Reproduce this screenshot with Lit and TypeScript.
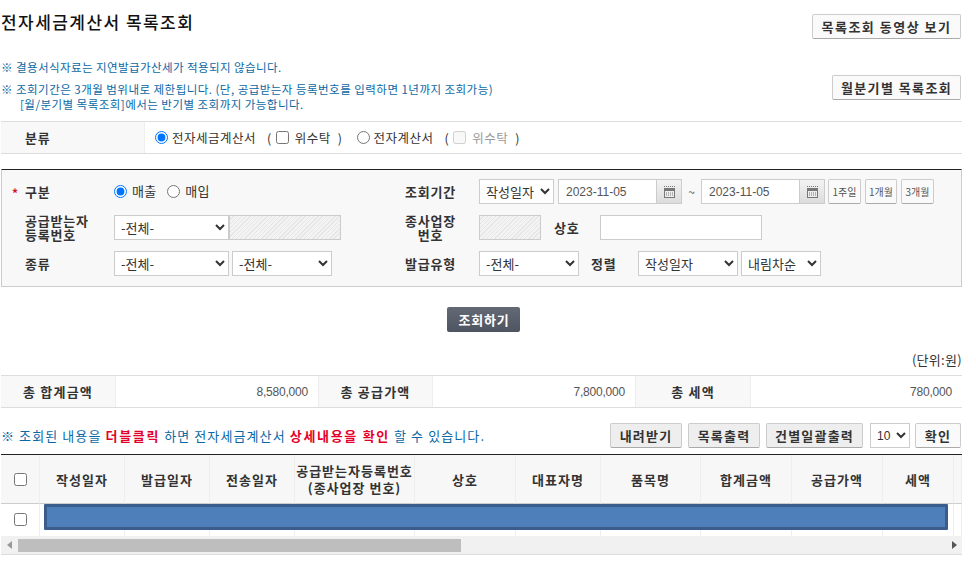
import { LitElement, html, css, svg } from "lit";
import { customElement } from "lit/decorators.js";

const cal = svg`<svg width="13" height="12" viewBox="0 0 13 12"><path d="M1 0.5h11" stroke="#777" stroke-dasharray="1 1"/><rect x="1.5" y="2.5" width="10" height="9" fill="#eee" stroke="#777"/><rect x="2" y="3" width="9" height="2" fill="#777"/><path d="M3 7h7M3 9h7" stroke="#777" stroke-dasharray="1 1"/></svg>`;

const cols = ["작성일자", "발급일자", "전송일자", "", "상호", "대표자명", "품목명", "합계금액", "공급가액", "세액", ""];

@customElement("app-root")
export class AppRoot extends LitElement {
  static styles = css`
    :host { display: block; width: 976px; height: 561px; overflow: hidden; background: #fff; font-family: "Noto Sans CJK KR", "Liberation Sans", sans-serif; font-size: 13px; color: #333; }
    * { box-sizing: border-box; }
    .page { width: 961px; margin-left: 1px; display: flex; flex-direction: column; }
    input[type=radio], input[type=checkbox] { margin: 0; flex: none; width: 13px; height: 13px; }
    select { font-family: "Noto Sans CJK KR", "Liberation Sans", sans-serif; font-size: 13px; height: 25px; border: 1px solid #ccc; background: #fff; color: #333; padding: 0 0 0 2px; margin: 0; flex: none; border-radius: 0; outline: 0; }
    .btn { display: flex; align-items: center; justify-content: center; height: 25px; background: #fafafa; border: 1px solid #ccc; border-bottom-color: #aaa; border-radius: 2px; font-weight: 700; font-size: 13px; letter-spacing: 1.2px; color: #333; flex: none; line-height: 1; }
    .head { display: flex; justify-content: space-between; height: 60px; padding-right: 1px; }
    h1 { margin: 10px 0 0 0; font-size: 17px; line-height: 24px; font-weight: 500; letter-spacing: 1.45px; color: #111; }
    .head .btn { width: 149px; margin: 14px 0 0 0; padding-bottom: 1px; letter-spacing: 1.5px; }
    .notes { display: flex; justify-content: space-between; height: 61px; color: #0b68a4; font-size: 11.5px; letter-spacing: 0.47px; padding-right: 1px; }
    .notes p { margin: 0; line-height: 15px; }
    .notes .one { margin-bottom: 7px; letter-spacing: 0.42px; }
    .notes .ind { padding-left: 19px; }
    .notes .btn { width: 129px; margin-top: 15px; padding-bottom: 1px; letter-spacing: 1.4px; }
    .cat { display: flex; height: 33px; border-top: 1px solid #ddd; border-bottom: 1px solid #ddd; margin-bottom: 15px; }
    .cat .th { width: 144px; background: #f8f8f8; border-right: 1px solid #eee; font-weight: 700; padding: 0 0 1px 24px; display: flex; align-items: center; letter-spacing: 0.8px; }
    .cat .td { display: flex; align-items: center; padding-left: 10px; font-size: 12.5px; color: #333; letter-spacing: 0.5px; }
    .paren { margin: 0 4px 0 11px; }
    .pc { margin: 0 14px 0 7px; }
    .cat span.t { margin-left: 4px; }
    .cat input[type=checkbox] + span.t { margin-left: 6px; }
    .dim { color: #999; }
    .search { display: grid; grid-template-columns: 112px 277px 88px 1fr; grid-auto-rows: 25px; row-gap: 11px; align-items: center; background: #f8f8f8; border: 1px solid #ccc; border-top: 1px solid #222; padding: 9px 0 10px; height: 118px; }
    .lb { font-weight: 700; letter-spacing: 0.8px; line-height: 14px; padding-left: 23px; position: relative; }
    .lbc { font-weight: 700; letter-spacing: 0.8px; line-height: 14px; text-align: center; padding-right: 9px; }
    .star { position: absolute; left: 10px; top: 1px; color: #d8112f; font-size: 12px; }
    .f { display: flex; align-items: center; height: 25px; }
    .f .t { margin-left: 5px; letter-spacing: 0.2px; padding-bottom: 2px; }
    input.gap { margin-left: 11px; }
    .hatch { height: 25px; border: 1px solid #ccc; background: repeating-linear-gradient(135deg, #f3f3f3 0 2px, #e6e6e6 2px 3px); flex: none; }
    .date { display: flex; height: 25px; flex: none; }
    .date .v { width: 99px; background: #fff; border: 1px solid #ccc; font: 12px "Liberation Sans", sans-serif; color: #555; display: flex; align-items: center; padding-left: 7px; }
    .date .c { width: 25px; border: 1px solid #ccc; border-left: 0; background: linear-gradient(#f3f3f3, #dcdcdc); display: flex; align-items: center; justify-content: center; }
    .sm { width: 33px; height: 25px; font-size: 10px; font-weight: 400; letter-spacing: 0; margin-left: 4px; color: #555; }
    .sm.first { margin-left: 3px; }
    .sm.mid { width: 32px; }
    .tilde { width: 19px; text-align: center; color: #555; font-size: 12px; flex: none; }
    .text { height: 25px; width: 162px; background: #fff; border: 1px solid #ccc; flex: none; margin-left: 0; }
    .name { width: 59px; padding: 0 0 0 13px; text-align: left; flex: none; }
    .sort { width: 59px; padding: 0 0 0 12px; text-align: left; flex: none; }
    .s115 { width: 115px; } .s100 { width: 100px; } .s75 { width: 75px; } .s80 { width: 80px; }
    .ml3 { margin-left: 3px; } .ml4 { margin-left: 4px; }
    .go { display: flex; justify-content: center; padding: 20px 0 0 4px; height: 65px; }
    .go .b { width: 73px; height: 25px; background: linear-gradient(#646a75, #4f5560); color: #fff; font-weight: 700; font-size: 13px; letter-spacing: 0.8px; border-radius: 2px; display: flex; align-items: center; justify-content: center; padding: 0 0 1px 1px; }
    .unit { text-align: right; height: 23px; line-height: 14px; padding-top: 1px; font-size: 13px; letter-spacing: 0.3px; }
    .sum { display: grid; grid-template-columns: 115px 202px 115px 202px 116px 1fr; height: 33px; border-top: 1px solid #ddd; border-bottom: 1px solid #ddd; }
    .sum .h { background: #f8f8f8; border-left: 1px solid #eee; border-right: 1px solid #eee; font-weight: 700; letter-spacing: 1.2px; display: flex; align-items: center; justify-content: center; }
    .sum .h:first-child { border-left: 0; }
    .sum .n { display: flex; align-items: center; justify-content: flex-end; padding-right: 10px; font: 12px "Liberation Sans", sans-serif; color: #555; letter-spacing: -0.2px; }
    .tools { display: flex; align-items: center; height: 46px; padding: 15px 1px 6px 0; }
    .msg { flex: 1; color: #0b68a4; font-size: 13px; letter-spacing: 1.1px; white-space: nowrap; }
    .msg b { color: #e4002b; font-weight: 700; letter-spacing: 1.7px; }
    .tools .btn { background: #eee; margin-left: 6px; }
    .tools .w72 { width: 72px; }
    .tools .w97 { width: 97px; }
    .tools .ok { background: #fafafa; margin-left: 5px; width: 46px; }
    .tools select { width: 40px; margin-left: 7px; font: 12px "Liberation Sans", sans-serif; }
    .grid { display: grid; grid-template-columns: 39px 85px 85px 85px 120px 101px 85px 100px 91px 91px 71px 8px; border-top: 1px solid #222; position: relative; }
    .grid .h { height: 49px; background: #f7f7f7; border-right: 1px solid #eee; border-bottom: 1px solid #ccc; display: flex; align-items: center; justify-content: center; text-align: center; font-weight: 700; letter-spacing: 1px; line-height: 17px; white-space: nowrap; }
    .grid .d { height: 32px; background: #fff; border-right: 1px solid #eee; display: flex; align-items: center; justify-content: center; padding-bottom: 2px; }
    .grid .h:last-child, .grid .d:last-child { border-right: 0; }
    .bar { position: absolute; left: 43px; top: 49px; width: 904px; height: 26px; background: #4f7fba; border: 3px solid #3a5d8c; border-radius: 1px; }
    .sb { height: 19px; background: #f1f1f1; border-bottom: 1px solid #ddd; display: flex; align-items: center; }
    .sb .arrow { width: 16px; flex: none; display: flex; justify-content: center; }
    .sb .thumb { width: 443px; height: 13px; background: #bebebe; flex: none; margin-left: 1px; }
    .sb .sp { flex: 1; }
    .tri { width: 0; height: 0; border-top: 4px solid transparent; border-bottom: 4px solid transparent; }
    .tri.l { border-right: 5px solid #999; }
    .tri.r { border-left: 5px solid #555; }
  `;

  render() {
    return html`<div class="page">
      <div class="head">
        <h1>전자세금계산서 목록조회</h1>
        <div class="btn">목록조회 동영상 보기</div>
      </div>
      <div class="notes">
        <div>
          <p class="one">※ 결용서식자료는 지연발급가산세가 적용되지 않습니다.</p>
          <p>※ 조회기간은 3개월 범위내로 제한됩니다. (단, 공급받는자 등록번호를 입력하면 1년까지 조회가능)</p>
          <p class="ind">[월/분기별 목록조회]에서는 반기별 조회까지 가능합니다.</p>
        </div>
        <div class="btn">월분기별 목록조회</div>
      </div>
      <div class="cat">
        <div class="th">분류</div>
        <div class="td">
          <input type="radio" name="c" checked /><span class="t">전자세금계산서</span>
          <span class="paren">(</span><input type="checkbox" /><span class="t">위수탁</span><span class="pc">)</span>
          <input type="radio" name="c" /><span class="t">전자계산서</span>
          <span class="paren">(</span><input type="checkbox" disabled /><span class="t dim">위수탁</span><span class="pc">)</span>
        </div>
      </div>
      <div class="search">
        <div class="lb"><span class="star">*</span>구분</div>
        <div class="f"><input type="radio" name="g" checked /><span class="t">매출</span><input class="gap" type="radio" name="g" /><span class="t">매입</span></div>
        <div class="lbc">조회기간</div>
        <div class="f">
          <select class="s75"><option>작성일자</option></select>
          <div class="date ml4"><div class="v">2023-11-05</div><div class="c">${cal}</div></div>
          <div class="tilde">~</div>
          <div class="date"><div class="v">2023-11-05</div><div class="c">${cal}</div></div>
          <div class="btn sm first">1주일</div>
          <div class="btn sm mid">1개월</div>
          <div class="btn sm">3개월</div>
        </div>
        <div class="lb">공급받는자<br />등록번호</div>
        <div class="f"><select class="s115"><option>-전체-</option></select><div class="hatch" style="width:112px"></div></div>
        <div class="lbc">종사업장<br />번호</div>
        <div class="f"><div class="hatch" style="width:62px"></div><span class="lbc name">상호</span><div class="text"></div></div>
        <div class="lb">종류</div>
        <div class="f"><select class="s115"><option>-전체-</option></select><select class="s100 ml3"><option>-전체-</option></select></div>
        <div class="lbc">발급유형</div>
        <div class="f"><select class="s100"><option>-전체-</option></select><span class="lbc sort">정렬</span><select class="s100"><option>작성일자</option></select><select class="s80 ml3"><option>내림차순</option></select></div>
      </div>
      <div class="go"><div class="b">조회하기</div></div>
      <div class="unit">(단위:원)</div>
      <div class="sum">
        <div class="h">총 합계금액</div><div class="n">8,580,000</div>
        <div class="h">총 공급가액</div><div class="n">7,800,000</div>
        <div class="h">총 세액</div><div class="n">780,000</div>
      </div>
      <div class="tools">
        <div class="msg">※ 조회된 내용을 <b>더블클릭</b> 하면 전자세금계산서 <b>상세내용을 확인</b> 할 수 있습니다.</div>
        <div class="btn w72">내려받기</div>
        <div class="btn w72">목록출력</div>
        <div class="btn w97">건별일괄출력</div>
        <select><option>10</option></select>
        <div class="btn ok">확인</div>
      </div>
      <div class="grid">
        <div class="h"><input type="checkbox" /></div>
        ${cols.slice(0, 3).map((c) => html`<div class="h">${c}</div>`)}
        <div class="h">공급받는자등록번호<br />(종사업장 번호)</div>
        ${cols.slice(4).map((c) => html`<div class="h">${c}</div>`)}
        <div class="d"><input type="checkbox" /></div>
        ${cols.map(() => html`<div class="d"></div>`)}
        <div class="bar"></div>
      </div>
      <div class="sb">
        <div class="arrow"><div class="tri l"></div></div>
        <div class="thumb"></div>
        <div class="sp"></div>
        <div class="arrow"><div class="tri r"></div></div>
      </div>
    </div>`;
  }
}
